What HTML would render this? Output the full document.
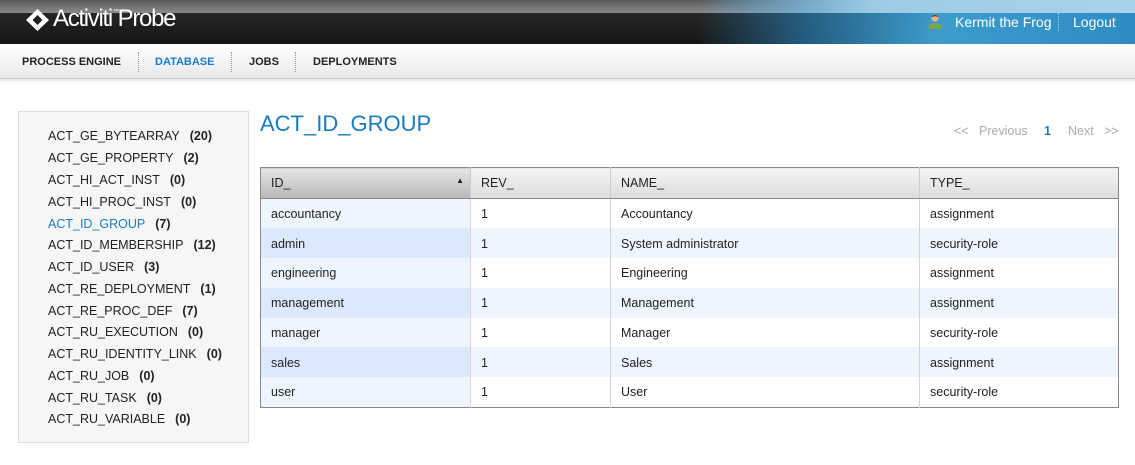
<!DOCTYPE html>
<html><head><meta charset="utf-8"><style>
*{margin:0;padding:0;box-sizing:border-box}
body{width:1135px;height:465px;background:#fff;font-family:"Liberation Sans",Arial,sans-serif;position:relative;overflow:hidden}
.hdr{position:absolute;left:0;top:0;width:1135px;height:44px;background:linear-gradient(#2d2d2d,#151515)}
.hdr:before{content:"";position:absolute;left:0;top:0;width:100%;height:13px;background:linear-gradient(#5a5a5a,#8a8a8a)}
.blue{position:absolute;left:700px;top:0;width:435px;height:44px;background:linear-gradient(100deg,rgba(40,140,195,0) 0%,rgba(40,120,170,.7) 25%,#3d9ccd 55%,#2d8cc2 100%)}
.blue:before{content:"";position:absolute;left:0;top:0;width:100%;height:13px;background:linear-gradient(90deg,rgba(160,205,230,0),#9dcbe6 40%,#a8d2ea)}
.logo{position:absolute;left:53px;top:5px;color:#fff;font-size:24px;letter-spacing:-1.3px}
.logo sup{font-size:6px;vertical-align:top;margin-left:1px;position:relative;top:4px}
.user{position:absolute;left:955px;top:14px;color:#fff;font-size:14px}
.sepv{position:absolute;left:1058px;top:13px;height:18px;border-left:1px dotted #bcd}
.logout{position:absolute;left:1073px;top:14px;color:#fff;font-size:14px}
.nav{position:absolute;left:0;top:44px;width:1135px;height:35px;background:linear-gradient(#fff,#e9e9e9);border-bottom:1px solid #c8c8c8}
.nav:after{content:"";position:absolute;left:0;top:35px;width:100%;height:4px;background:linear-gradient(#e6e6e6,#fff)}
.nav span{position:absolute;top:12px;font-size:11px;font-weight:bold;color:#222}
.nav i{position:absolute;top:8px;height:20px;border-left:1px dotted #999}
.side{position:absolute;left:18px;top:111px;width:231px;height:332px;background:#f6f6f6;border:1px solid #ddd}
.side div{position:absolute;left:29px;font-size:12.5px;color:#222}
.side b{margin-left:10px}
h1{position:absolute;left:260px;top:111px;font-size:22px;font-weight:normal;color:#1a7bc4}
.pg{position:absolute;top:124px;font-size:12.5px;color:#aaa}
table{position:absolute;left:260px;top:167px;width:859px;border-collapse:collapse;border:1px solid #888;font-size:12.5px;color:#222}
th{height:31px;text-align:left;font-weight:normal;padding-left:10px;background:linear-gradient(#f4f4f4,#dcdcdc);border-left:1px solid #ccc;border-bottom:1px solid #888}
th.s{background:linear-gradient(#e6e6e6,#b8b8b8)}
td{height:29.8px;padding-left:10px;padding-top:1px;border-left:1px solid #d4d4d4}
tr.e td{background:#eef5fe}
td.c{background:#eef5fe}
tr.e td.c{background:#dce8fb}
</style></head><body>
<div class="hdr"></div><div class="blue"></div>
<svg style="position:absolute;left:25px;top:8px" width="25" height="24" viewBox="0 0 25 24"><path d="M12.5 1 L24 12 L12.5 23 L1 12 Z M12.5 7 L7.5 12 L12.5 17 L17.5 12 Z" fill="#fff" fill-rule="evenodd"/></svg>
<div class="logo">Activiti<sup>™</sup>Probe</div>
<svg style="position:absolute;left:927px;top:13px" width="16" height="16" viewBox="0 0 16 16"><circle cx="8" cy="5" r="3.5" fill="#e8b890"/><path d="M4.5 3.5 Q8 0 11.5 3.5 L11 4 Q8 2.5 5 4Z" fill="#5a3a20"/><path d="M1 16 Q1 10 8 10 Q15 10 15 16Z" fill="#7aa848"/></svg>
<div class="user">Kermit the Frog</div><div class="sepv"></div><div class="logout">Logout</div>
<div class="nav">
<span style="left:22px">PROCESS ENGINE</span><i style="left:138px"></i>
<span style="left:155px;color:#1a7bc4">DATABASE</span><i style="left:231px"></i>
<span style="left:249px">JOBS</span><i style="left:295px"></i>
<span style="left:313px">DEPLOYMENTS</span>
</div>
<div class="side">
<div style="top:17px">ACT_GE_BYTEARRAY<b>(20)</b></div>
<div style="top:39px">ACT_GE_PROPERTY<b>(2)</b></div>
<div style="top:61px">ACT_HI_ACT_INST<b>(0)</b></div>
<div style="top:83px">ACT_HI_PROC_INST<b>(0)</b></div>
<div style="top:105px;color:#1a7bc4">ACT_ID_GROUP<b style="color:#222">(7)</b></div>
<div style="top:126px">ACT_ID_MEMBERSHIP<b>(12)</b></div>
<div style="top:148px">ACT_ID_USER<b>(3)</b></div>
<div style="top:170px">ACT_RE_DEPLOYMENT<b>(1)</b></div>
<div style="top:192px">ACT_RE_PROC_DEF<b>(7)</b></div>
<div style="top:213px">ACT_RU_EXECUTION<b>(0)</b></div>
<div style="top:235px">ACT_RU_IDENTITY_LINK<b>(0)</b></div>
<div style="top:257px">ACT_RU_JOB<b>(0)</b></div>
<div style="top:279px">ACT_RU_TASK<b>(0)</b></div>
<div style="top:300px">ACT_RU_VARIABLE<b>(0)</b></div>
</div>
<h1>ACT_ID_GROUP</h1>
<div class="pg" style="left:954px">&lt;&lt;&nbsp;&nbsp; Previous</div>
<div class="pg" style="left:1044px;color:#1a7bc4;font-weight:bold">1</div>
<div class="pg" style="left:1068px">Next&nbsp;&nbsp; &gt;&gt;</div>
<table>
<tr><th class="s" style="width:210px;border-left:none">ID_<span style="float:right;margin-right:6px;font-size:8px">▲</span></th><th style="width:140px">REV_</th><th style="width:309px">NAME_</th><th>TYPE_</th></tr>
<tr><td class="c" style="border-left:none">accountancy</td><td>1</td><td>Accountancy</td><td>assignment</td></tr>
<tr class="e"><td class="c" style="border-left:none">admin</td><td>1</td><td>System administrator</td><td>security-role</td></tr>
<tr><td class="c" style="border-left:none">engineering</td><td>1</td><td>Engineering</td><td>assignment</td></tr>
<tr class="e"><td class="c" style="border-left:none">management</td><td>1</td><td>Management</td><td>assignment</td></tr>
<tr><td class="c" style="border-left:none">manager</td><td>1</td><td>Manager</td><td>security-role</td></tr>
<tr class="e"><td class="c" style="border-left:none">sales</td><td>1</td><td>Sales</td><td>assignment</td></tr>
<tr><td class="c" style="border-left:none">user</td><td>1</td><td>User</td><td>security-role</td></tr>
</table>
</body></html>
